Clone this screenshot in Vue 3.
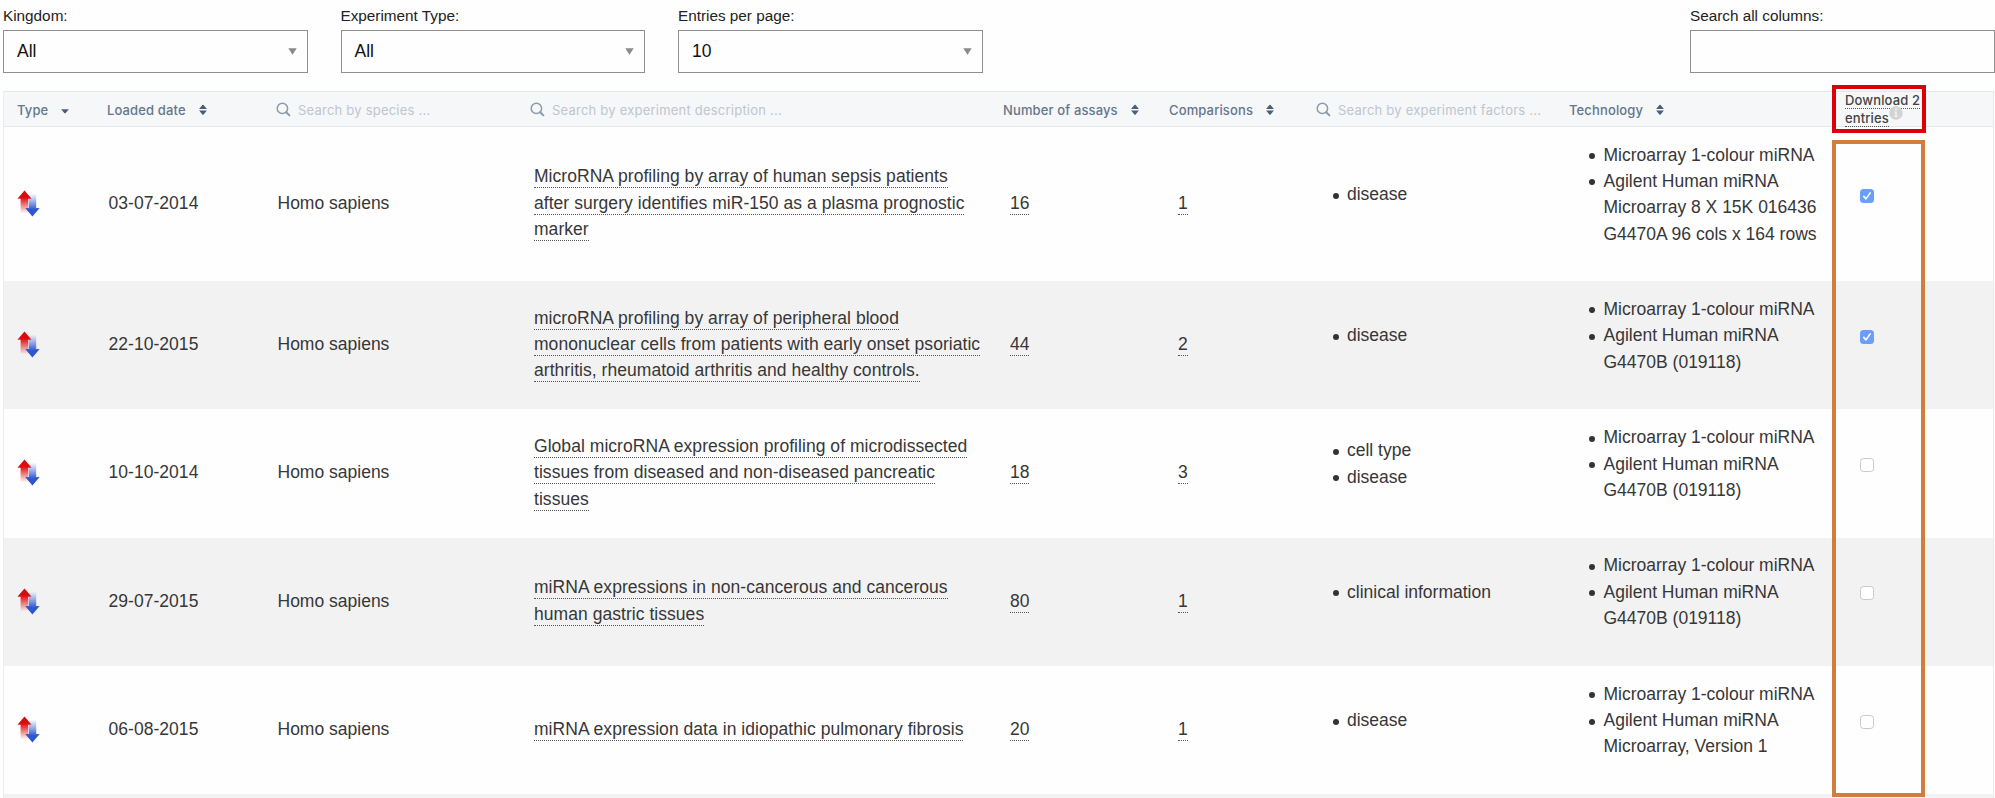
<script setup>
const filters = [
  { label: 'Kingdom:', value: 'All' },
  { label: 'Experiment Type:', value: 'All' },
  { label: 'Entries per page:', value: '10' },
]

const headers = [
  { text: 'Type', kind: 'down' },
  { text: 'Loaded date', kind: 'sort' },
  { text: 'Search by species ...', kind: 'search' },
  { text: 'Search by experiment description ...', kind: 'search' },
  { text: 'Number of assays', kind: 'sort' },
  { text: 'Comparisons', kind: 'sort' },
  { text: 'Search by experiment factors ...', kind: 'search' },
  { text: 'Technology', kind: 'sort' },
]

const rows = [
  {
    date: '03-07-2014', species: 'Homo sapiens',
    title: 'MicroRNA profiling by array of human sepsis patients after surgery identifies miR-150 as a plasma prognostic marker',
    assays: 16, comparisons: 1, factors: ['disease'],
    tech: ['Microarray 1-colour miRNA', 'Agilent Human miRNA Microarray 8 X 15K 016436 G4470A 96 cols x 164 rows'],
    checked: true,
  },
  {
    date: '22-10-2015', species: 'Homo sapiens',
    title: 'microRNA profiling by array of peripheral blood mononuclear cells from patients with early onset psoriatic arthritis, rheumatoid arthritis and healthy controls.',
    assays: 44, comparisons: 2, factors: ['disease'],
    tech: ['Microarray 1-colour miRNA', 'Agilent Human miRNA G4470B (019118)'],
    checked: true,
  },
  {
    date: '10-10-2014', species: 'Homo sapiens',
    title: 'Global microRNA expression profiling of microdissected tissues from diseased and non-diseased pancreatic tissues',
    assays: 18, comparisons: 3, factors: ['cell type', 'disease'],
    tech: ['Microarray 1-colour miRNA', 'Agilent Human miRNA G4470B (019118)'],
    checked: false,
  },
  {
    date: '29-07-2015', species: 'Homo sapiens',
    title: 'miRNA expressions in non-cancerous and cancerous human gastric tissues',
    assays: 80, comparisons: 1, factors: ['clinical information'],
    tech: ['Microarray 1-colour miRNA', 'Agilent Human miRNA G4470B (019118)'],
    checked: false,
  },
  {
    date: '06-08-2015', species: 'Homo sapiens',
    title: 'miRNA expression data in idiopathic pulmonary fibrosis',
    assays: 20, comparisons: 1, factors: ['disease'],
    tech: ['Microarray 1-colour miRNA', 'Agilent Human miRNA Microarray, Version 1'],
    checked: false,
  },
]
</script>

<template>
  <div class="page">
    <svg class="defs" width="0" height="0">
      <defs>
        <linearGradient id="redFade" x1="0" y1="0" x2="0" y2="1">
          <stop offset="0.3" stop-color="#dc0a0a" />
          <stop offset="1" stop-color="#dc0a0a" stop-opacity="0.03" />
        </linearGradient>
        <linearGradient id="blueFade" x1="0" y1="0" x2="0" y2="1">
          <stop offset="0" stop-color="#3b6be0" stop-opacity="0.03" />
          <stop offset="0.7" stop-color="#2f55cf" />
        </linearGradient>
      </defs>
    </svg>

    <div class="filters">
      <div v-for="f in filters" :key="f.label" class="field">
        <div class="label">{{ f.label }}</div>
        <div class="box">
          <span>{{ f.value }}</span>
          <svg width="9" height="7" viewBox="0 0 9 7"><path d="M0.3 0.3H8.7L4.5 6.7Z" fill="#8a8a8a" /></svg>
        </div>
      </div>
      <div class="field search-all">
        <div class="label">Search all columns:</div>
        <div class="box"></div>
      </div>
    </div>

    <div class="table">
      <div class="row head">
        <div v-for="h in headers" :key="h.text" class="th" :class="h.kind">
          <svg v-if="h.kind === 'search'" class="glass" width="15" height="15" viewBox="0 0 15 15">
            <circle cx="6.4" cy="6.4" r="5.2" fill="none" stroke="#8d99a8" stroke-width="1.5" />
            <path d="M10.2 10.2L13.4 13.4" stroke="#8d99a8" stroke-width="2" stroke-linecap="round" />
          </svg>
          <span>{{ h.text }}</span>
          <svg v-if="h.kind === 'sort'" class="arrows" width="8" height="12" viewBox="0 0 8 12">
            <path d="M0.1 4.9L3.4 1Q4 0.3 4.6 1L7.9 4.9Z M0.1 6.5H7.9L4.6 10.6Q4 11.3 3.4 10.6Z" fill="#4a5e7a" />
          </svg>
          <svg v-if="h.kind === 'down'" class="caret" width="8" height="5" viewBox="0 0 8 5">
            <path d="M0.1 0.2H7.9L4.7 4Q4 4.8 3.3 4Z" fill="#4a5e7a" />
          </svg>
        </div>
        <div class="th download">
          <a>Download 2</a><br><a>entries</a>
          <svg class="info" width="14" height="14" viewBox="0 0 14 14">
            <circle cx="7" cy="7" r="6.7" fill="#d3d3d3" />
            <path d="M5.3 5.6H7.8V10H8.8V11H5.2V10H6.2V6.6H5.3Z M6.1 2.6H7.9V4.4H6.1Z" fill="#f2f2f2" />
          </svg>
        </div>
      </div>

      <div v-for="(r, i) in rows" :key="i" class="row body" :class="{ tall: i === 0, alt: i % 2 === 1 }">
        <div class="c-type">
          <svg width="24" height="28" viewBox="0 0 24 28">
            <path d="M7.5 0.5L14.6 8.8H11.2V23H3.6V8.8H0.4Z" fill="url(#redFade)" />
            <path d="M11.8 4H19.2V18H22.7L15.4 26.4L8.2 18H11.8Z" fill="url(#blueFade)" />
          </svg>
        </div>
        <div class="c-date">{{ r.date }}</div>
        <div class="c-species">{{ r.species }}</div>
        <div class="c-title"><a>{{ r.title }}</a></div>
        <div class="c-assays"><a>{{ r.assays }}</a></div>
        <div class="c-comp"><a>{{ r.comparisons }}</a></div>
        <ul class="c-factors"><li v-for="f in r.factors" :key="f">{{ f }}</li></ul>
        <ul class="c-tech"><li v-for="t in r.tech" :key="t">{{ t }}</li></ul>
        <div class="c-check">
          <span class="check" :class="{ on: r.checked }">
            <svg v-if="r.checked" width="14" height="14" viewBox="0 0 14 14">
              <path d="M3.8 7.4L6 9.9L10.2 3.9" fill="none" stroke="#fff" stroke-width="1.6" stroke-linecap="round" stroke-linejoin="round" />
            </svg>
          </span>
        </div>
      </div>
      <div class="next"></div>
    </div>

    <div class="mark red"></div>
    <div class="mark orange"></div>
  </div>
</template>

<style>
body { background: #fefefe; overflow: hidden; }
</style>

<style scoped>
.page {
  position: relative;
  width: 1995px;
  height: 798px;
  overflow: hidden;
  box-sizing: border-box;
  padding-left: 3px;
  font-family: "Liberation Sans", Arial, sans-serif;
  font-size: 17.5px;
  line-height: 26.35px;
  color: #373737;
}
.defs { position: absolute; }
.filters { display: flex; gap: 33px; height: 91px; }
.field { width: 304.5px; }
.search-all { margin-left: auto; margin-right: 0.5px; }
.label {
  height: 25px;
  margin-bottom: 5px;
  padding-top: 3px;
  box-sizing: border-box;
  font-size: 15.3px;
  line-height: 25px;
  color: #222;
  white-space: nowrap;
}
.box {
  display: flex;
  justify-content: space-between;
  align-items: center;
  height: 43px;
  box-sizing: border-box;
  border: 1.5px solid #8f8f8f;
  padding: 0 10px 0 13px;
  color: #111;
}
.table {
  width: 1991px;
  box-sizing: border-box;
  border-left: 1px solid #ededee;
  border-right: 1px solid #e9ebed;
}
.row {
  display: grid;
  grid-template-columns: 103px 169px 254px 473px 166px 147px 253px 276px 1fr;
  align-items: center;
}
.head {
  height: 36px;
  box-sizing: border-box;
  padding-bottom: 1px;
  background: #f5f7f9;
  border-top: 1px solid #e4e8ec;
  border-bottom: 1px solid #e4e8ec;
  font-family: Inter, sans-serif;
  font-size: 13px;
  line-height: 18px;
  font-weight: 500;
  letter-spacing: 0.13px;
  color: #66768c;
}
.th { display: flex; align-items: center; white-space: nowrap; }
.th.down { padding-left: 13px; }
.arrows { margin-left: 13px; }
.caret { margin: 4px 0 0 13px; }
.th.search { color: #bfc6ce; font-weight: 400; letter-spacing: 0.22px; }
.glass { margin-right: 7px; }
.th.download {
  position: relative;
  display: block;
  line-height: 17.5px;
  color: #444;
}
.th.download a { border-bottom: 1px dotted #555; }
.info { position: absolute; left: 44px; top: 14px; }
.body { height: 128.3px; background: #fefefe; }
.body.tall { height: 154px; }
.body.alt { background: #f2f2f2; }
.body a { border-bottom: 1px dotted #555; padding-bottom: 1px; }
.row.body > :not(.c-type):not(.c-check) { padding-bottom: 2px; }
.c-type { padding-left: 13px; }
.c-type svg { display: block; }
.c-date { padding-left: 1.5px; letter-spacing: 0.04px; }
.c-species { padding-left: 1.5px; }
.c-title { padding-left: 4px; width: 448px; letter-spacing: 0.045px; }
.c-assays { padding-left: 7px; }
.c-comp { padding-left: 9px; }
ul { margin: 0 0 17.5px; padding: 0; list-style: none; }
li { position: relative; }
li::before {
  content: "";
  position: absolute;
  left: -14.5px;
  top: 11.5px;
  width: 6px;
  height: 6px;
  border-radius: 50%;
  background: #333;
}
.c-factors { padding-left: 31px; }
.c-tech { padding-left: 34.5px; width: 218px; }
.c-check { padding-left: 15px; margin-bottom: 17px; display: flex; }
.check {
  display: block;
  width: 14px;
  height: 14px;
  box-sizing: border-box;
  border: 1px solid #c9c9c9;
  border-radius: 3.5px;
  background: #fff;
}
.check.on { border: 0; background: #699ffa; }
.check svg { display: block; }
.next { height: 6px; background: #f2f2f2; }
.mark { position: absolute; box-sizing: border-box; border: 4px solid; }
.red { left: 1832px; top: 85px; width: 94px; height: 48px; border-color: #db0007; }
.orange { left: 1832px; top: 140px; width: 93px; height: 657px; border-color: #d17e3c; }
</style>
